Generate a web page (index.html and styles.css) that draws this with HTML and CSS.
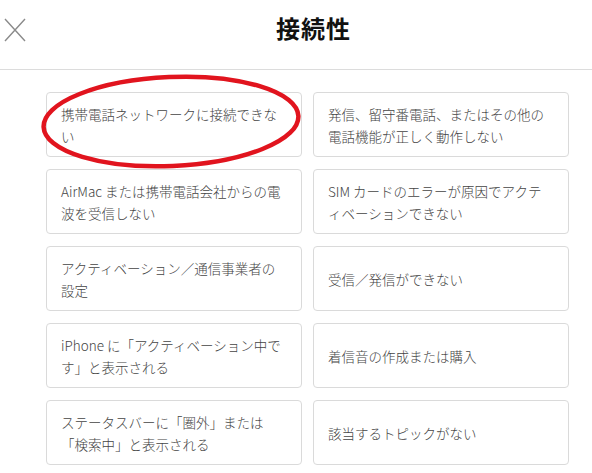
FILE: index.html
```html
<!DOCTYPE html>
<html lang="ja">
<head>
<meta charset="utf-8">
<link rel="stylesheet" href="styles.css">
</head>
<body>
<div class="page">
  <header class="header">
    <button class="close" aria-label="閉じる">
      <svg width="22" height="24" viewBox="0 0 22 24"><path d="M1 1 L21 23 M21 1 L1 23" stroke="#8a8a8a" stroke-width="1.4" fill="none"/></svg>
    </button>
    <h1 class="title">接続性</h1>
  </header>
  <main class="grid">
    <div class="card">携帯電話ネットワークに接続できない</div>
    <div class="card">発信、留守番電話、またはその他の電話機能が正しく動作しない</div>
    <div class="card">AirMac または携帯電話会社からの電波を受信しない</div>
    <div class="card">SIM カードのエラーが原因でアクティベーションできない</div>
    <div class="card">アクティベーション／通信事業者の設定</div>
    <div class="card">受信／発信ができない</div>
    <div class="card">iPhone に「アクティベーション中です」と表示される</div>
    <div class="card">着信音の作成または購入</div>
    <div class="card">ステータスバーに「圏外」または「検索中」と表示される</div>
    <div class="card">該当するトピックがない</div>
  </main>
  <svg class="mark" width="592" height="473" viewBox="0 0 592 473"><ellipse cx="171" cy="121.5" rx="127.5" ry="44.5" transform="rotate(-2.5 171 121.5)" fill="none" stroke="#e1141e" stroke-width="4.5"/></svg>
</div>
</body>
</html>
```
FILE: styles.css
```css
html, body {
  margin: 0;
  padding: 0;
  background: #fff;
}
.page {
  position: relative;
  width: 592px;
  height: 473px;
  overflow: hidden;
  font-family: "Noto Sans CJK JP", "Noto Sans", sans-serif;
}
.header {
  display: flex;
  align-items: flex-start;
  height: 69px;
  border-bottom: 1px solid #dcdcdc;
  box-sizing: content-box;
}
.close {
  margin: 18px 9px 0 4px;
  padding: 0;
  border: 0;
  background: none;
  width: 22px;
  height: 24px;
  display: block;
}
.close svg { display: block; }
.title {
  flex: 1;
  margin: 12px 0 0;
  text-align: center;
  font-size: 24px;
  line-height: 32px;
  font-weight: 700;
  color: #111;
  letter-spacing: 1px;
}
.grid {
  display: grid;
  grid-template-columns: 256px 256px;
  grid-auto-rows: 65px;
  column-gap: 11px;
  row-gap: 12px;
  padding: 22px 0 0 46px;
}
.card {
  display: flex;
  align-items: center;
  box-sizing: border-box;
  border: 1px solid #dadada;
  border-radius: 4px;
  padding: 0 14px;
  font-size: 13.5px;
  line-height: 22px;
  font-weight: 300;
  color: #444;
}
.mark {
  position: absolute;
  left: 0;
  top: 0;
  pointer-events: none;
}
```
